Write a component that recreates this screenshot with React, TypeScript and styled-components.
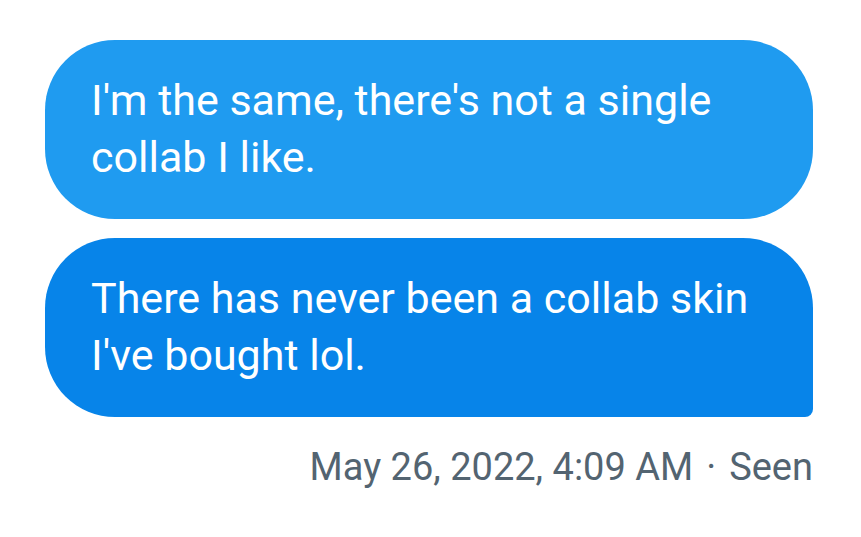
import React from 'react';
import styled, { createGlobalStyle } from 'styled-components';

const GlobalStyle = createGlobalStyle`
  html, body {
    margin: 0;
    padding: 0;
    background: #ffffff;
  }
  body {
    font-family: Roboto, "Noto Sans", "Liberation Sans", sans-serif;
  }
`;

type BubbleProps = { $tone: 'light' | 'dark'; $last?: boolean };

const messages = [
  { id: 1, text: "I'm the same, there's not a single collab I like." },
  { id: 2, text: "There has never been a collab skin I've bought lol." },
];

export default function App(): React.JSX.Element {
  return (
    <>
      <GlobalStyle />
      <StyledThread>
        {messages.map((m, i) => (
          <StyledBubble
            key={m.id}
            $tone={i === messages.length - 1 ? 'dark' : 'light'}
            $last={i === messages.length - 1}
          >
            {m.text}
          </StyledBubble>
        ))}
        <StyledMeta>
          May 26, 2022, 4:09 AM<StyledDot>·</StyledDot>Seen
        </StyledMeta>
      </StyledThread>
    </>
  );
}

const StyledThread = styled.div`
  display: flex;
  flex-direction: column;
  align-items: stretch;
  gap: 19px;
  padding: 40px 48px 0 45px;
`;

const StyledBubble = styled.div<BubbleProps>`
  box-sizing: border-box;
  width: 768px;
  padding: 32px 46px 33px;
  border-radius: ${(p) => (p.$last ? '70px 70px 8px 70px' : '70px')};
  background: ${(p) => (p.$tone === 'dark' ? '#0784e9' : '#1f9bf0')};
  color: #ffffff;
  font-size: 43px;
  line-height: 57px;
  letter-spacing: 0;
`;

const StyledMeta = styled.div`
  margin-top: 6px;
  text-align: right;
  color: #536471;
  font-size: 38px;
  line-height: 50px;
`;

const StyledDot = styled.span`
  padding: 0 13px;
`;
